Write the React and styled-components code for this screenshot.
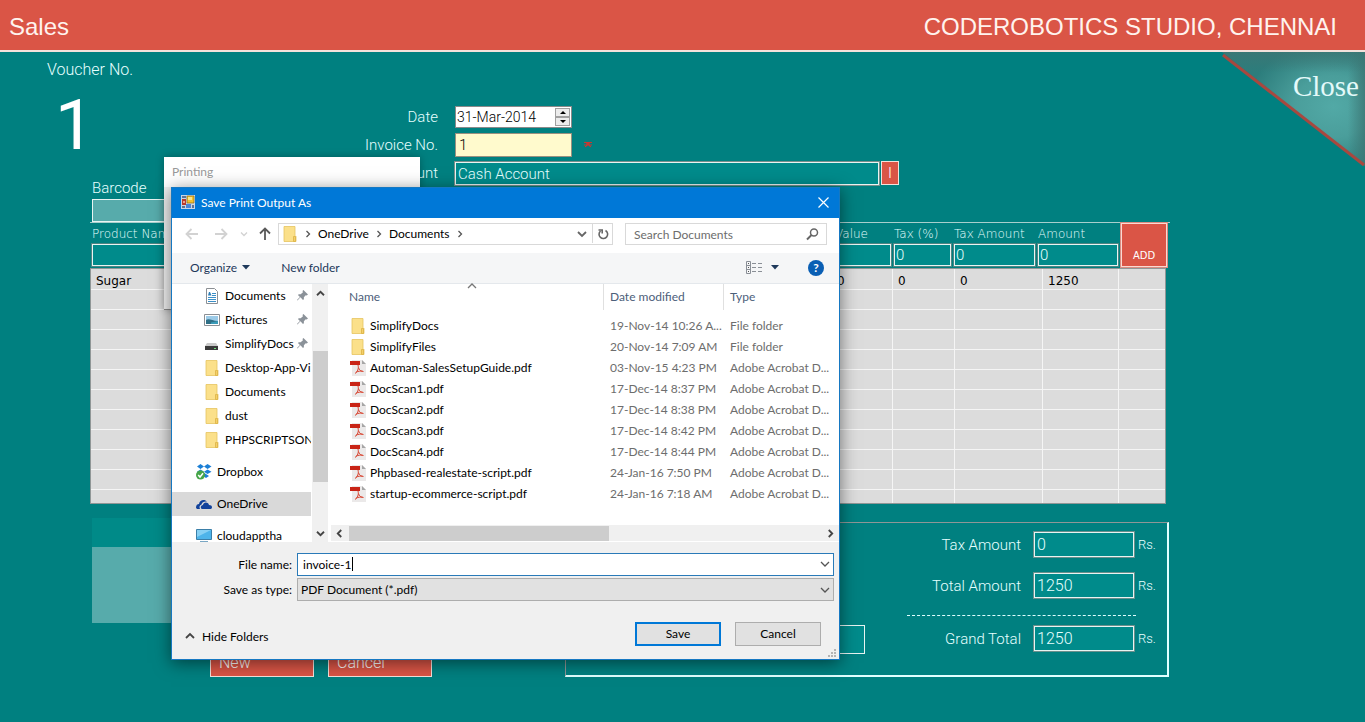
import { useState } from "react";
import styled, { createGlobalStyle } from "styled-components";

const entryFields = [
  { id: "value", label: "Value", width: 59, value: "" },
  { id: "tax", label: "Tax (%)", width: 60, value: "0" },
  { id: "taxAmount", label: "Tax Amount", width: 84, value: "0" },
  { id: "amount", label: "Amount", width: 83, value: "0" },
];

const totals = [
  { id: "totalTax", label: "Tax Amount", value: "0" },
  { id: "totalAmount", label: "Total Amount", value: "1250" },
];

const places = [
  { name: "Documents", icon: "document", pinned: true },
  { name: "Pictures", icon: "picture", pinned: true },
  { name: "SimplifyDocs", icon: "drive", pinned: true },
  { name: "Desktop-App-Vi", icon: "folder" },
  { name: "Documents", icon: "folder" },
  { name: "dust", icon: "folder" },
  { name: "PHPSCRIPTSON", icon: "folder" },
  { name: "Dropbox", icon: "dropbox", root: true },
  { name: "OneDrive", icon: "onedrive", root: true, selected: true },
  { name: "cloudapptha", icon: "computer", root: true },
];

const files = [
  { name: "SimplifyDocs", date: "19-Nov-14 10:26 A...", folder: true },
  { name: "SimplifyFiles", date: "20-Nov-14 7:09 AM", folder: true },
  { name: "Automan-SalesSetupGuide.pdf", date: "03-Nov-15 4:23 PM" },
  { name: "DocScan1.pdf", date: "17-Dec-14 8:37 PM" },
  { name: "DocScan2.pdf", date: "17-Dec-14 8:38 PM" },
  { name: "DocScan3.pdf", date: "17-Dec-14 8:42 PM" },
  { name: "DocScan4.pdf", date: "17-Dec-14 8:44 PM" },
  { name: "Phpbased-realestate-script.pdf", date: "24-Jan-16 7:50 PM" },
  { name: "startup-ecommerce-script.pdf", date: "24-Jan-16 7:18 AM" },
];

const emptyRows = Array.from({ length: 11 }, (_, i) => i);

export default function App() {
  return (
    <>
      <GlobalStyle />
      <Header>
        <h1>Sales</h1>
        <h2>CODEROBOTICS STUDIO, CHENNAI</h2>
      </Header>
      <Main>
        <CloseCorner type="button">
          <CornerArt />
          <span>Close</span>
        </CloseCorner>
        <VoucherForm />
        <Sheet>
          <Barcode>
            <label htmlFor="barcode">Barcode</label>
            <input id="barcode" />
          </Barcode>
          <ItemEntry />
          <ItemTable />
        </Sheet>
        <Summary />
        <PrintingWindow>Printing</PrintingWindow>
        <SaveDialog />
      </Main>
    </>
  );
}

function VoucherForm() {
  return (
    <Voucher>
      <VoucherNumber>
        <p>Voucher No.</p>
        <strong>1</strong>
      </VoucherNumber>
      <Fields>
        <label htmlFor="date">Date</label>
        <DateBox>
          <input id="date" defaultValue="31-Mar-2014" />
          <Spinner>
            <button type="button" aria-label="Next day">
              <svg width="6" height="3"><path d="M0 3 3 0 6 3Z" /></svg>
            </button>
            <button type="button" aria-label="Previous day">
              <svg width="6" height="3"><path d="M0 0 3 3 6 0Z" /></svg>
            </button>
          </Spinner>
        </DateBox>
        <label htmlFor="invoice">Invoice No.</label>
        <FieldLine>
          <InvoiceInput id="invoice" defaultValue="1" />
          <svg width="8" height="8" viewBox="0 0 8 8">
            <path d="M0 1.500h8M1.500 6 4 1.500 6.500 6M0 4h8M1 1l6 5M7 1 1 6" stroke="#d5342c" strokeWidth=".9" fill="none" />
          </svg>
        </FieldLine>
        <label htmlFor="account">Account</label>
        <FieldLine>
          <AccountInput id="account" defaultValue="Cash Account" />
          <LookupButton type="button">I</LookupButton>
        </FieldLine>
      </Fields>
    </Voucher>
  );
}

function ItemEntry() {
  return (
    <Entry>
      <EntryField>
        <label htmlFor="product">Product Name</label>
        <input id="product" />
      </EntryField>
      {entryFields.map((field) => (
        <EntryField key={field.id} $width={field.width}>
          <label htmlFor={field.id}>{field.label}</label>
          <input id={field.id} defaultValue={field.value} />
        </EntryField>
      ))}
      <AddButton type="button">ADD</AddButton>
    </Entry>
  );
}

function ItemTable() {
  return (
    <Items>
      <colgroup>
        <col />
        <Col $width={84} />
        <Col $width={62} />
        <Col $width={88} />
        <Col $width={76} />
        <Col $width={46} />
      </colgroup>
      <tbody>
        <tr>
          <td>Sugar</td>
          <td>1250</td>
          <td>0</td>
          <td>0</td>
          <td>1250</td>
          <td />
        </tr>
        {emptyRows.map((row) => (
          <tr key={row}>
            <td /><td /><td /><td /><td /><td />
          </tr>
        ))}
      </tbody>
    </Items>
  );
}

function TotalRow({ id, label, value }) {
  return (
    <TotalLine>
      <label htmlFor={id}>{label}</label>
      <input id={id} defaultValue={value} />
      <span>Rs.</span>
    </TotalLine>
  );
}

function Summary() {
  return (
    <SummaryRow>
      <Actions>
        <NotesHead />
        <NotesBody />
        <ButtonRow>
          <RedButton type="button">New</RedButton>
          <RedButton type="button">Cancel</RedButton>
        </ButtonRow>
      </Actions>
      <TotalsPanel>
        <PaidInput aria-label="Paid" />
        <TotalsList>
          {totals.map((total) => (
            <TotalRow key={total.id} {...total} />
          ))}
          <Rule />
          <TotalRow id="grandTotal" label="Grand Total" value="1250" />
        </TotalsList>
      </TotalsPanel>
    </SummaryRow>
  );
}

function SaveDialog() {
  const [fileName, setFileName] = useState("invoice-1");

  return (
    <Dialog role="dialog" aria-labelledby="dialog-title">
      <TitleBar>
        <AppIcon />
        <h3 id="dialog-title">Save Print Output As</h3>
        <button type="button" aria-label="Close dialog">
          <svg width="11" height="11"><path d="M.5.5l10 10M10.500.5l-10 10" stroke="#fff" strokeWidth="1.200" /></svg>
        </button>
      </TitleBar>
      <NavBar>
        <NavButton type="button" aria-label="Back" $width={29}><Arrow color="#d2d2d2" turn={0} /></NavButton>
        <NavButton type="button" aria-label="Forward" $width={30}><Arrow color="#d2d2d2" turn={180} /></NavButton>
        <NavButton type="button" aria-label="Recent" $width={16}><Chevron color="#d2d2d2" size={6} turn={0} /></NavButton>
        <NavButton type="button" aria-label="Up" $width={26}><Arrow color="#5a5a5a" turn={90} /></NavButton>
        <Address>
          <FolderIcon />
          <Chevron color="#555" size={6} turn={-90} />
          <span>OneDrive</span>
          <Chevron color="#555" size={6} turn={-90} />
          <span>Documents</span>
          <Chevron color="#555" size={6} turn={-90} />
          <AddressEnd>
            <button type="button" aria-label="Previous locations"><Chevron color="#666" size={8} turn={0} thick={2} /></button>
            <button type="button" aria-label="Refresh"><RefreshIcon /></button>
          </AddressEnd>
        </Address>
        <Search>
          <input aria-label="Search Documents" placeholder="Search Documents" />
          <svg width="13" height="13" fill="none" stroke="#666" strokeWidth="1.500">
            <circle cx="8" cy="4.500" r="3.500" />
            <path d="M5.500 7 1 11.500" strokeWidth="2" />
          </svg>
        </Search>
      </NavBar>
      <ToolBar>
        <button type="button">Organize <Caret /></button>
        <button type="button">New folder</button>
        <ToolEnd>
          <button type="button" aria-label="Change view"><ViewIcon /><Caret /></button>
          <HelpButton type="button" aria-label="Help">?</HelpButton>
        </ToolEnd>
      </ToolBar>
      <Browser>
        <Places>
          {places.map((place, index) => (
            <Place key={index} $root={place.root} $selected={place.selected}>
              <PlaceIcon kind={place.icon} />
              <span>{place.name}</span>
              {place.pinned && <PinIcon />}
            </Place>
          ))}
        </Places>
        <VerticalScroll>
          <Chevron color="#444" size={7} turn={180} thick={2} />
          <div />
          <Chevron color="#444" size={7} turn={0} thick={2} />
        </VerticalScroll>
        <FilePane>
          <FileTable>
            <colgroup>
              <Col $width={272} />
              <Col $width={120} />
              <col />
            </colgroup>
            <thead>
              <tr>
                <th>
                  Name
                  <SortMark><Chevron color="#777" size={8} turn={180} /></SortMark>
                </th>
                <th>Date modified</th>
                <th>Type</th>
              </tr>
            </thead>
            <tbody>
              {files.map((file) => (
                <tr key={file.name}>
                  <td>
                    <FileName>
                      {file.folder ? <FolderIcon /> : <PdfIcon />}
                      {file.name}
                    </FileName>
                  </td>
                  <td>{file.date}</td>
                  <td>{file.folder ? "File folder" : "Adobe Acrobat D..."}</td>
                </tr>
              ))}
            </tbody>
          </FileTable>
          <HorizontalScroll>
            <Chevron color="#444" size={7} turn={90} thick={2} />
            <div />
            <Chevron color="#444" size={7} turn={-90} thick={2} />
          </HorizontalScroll>
        </FilePane>
      </Browser>
      <Footer>
        <SaveFields>
          <label htmlFor="filename">File name:</label>
          <NameBox>
            <input id="filename" value={fileName} onChange={(e) => setFileName(e.target.value)} />
            <TextCaret />
            <Chevron color="#555" size={8} turn={0} />
          </NameBox>
          <label htmlFor="filetype">Save as type:</label>
          <TypeBox>
            <select id="filetype">
              <option>PDF Document (*.pdf)</option>
            </select>
            <Chevron color="#555" size={8} turn={0} />
          </TypeBox>
        </SaveFields>
        <FooterButtons>
          <HideFolders type="button">
            <Chevron color="#444" size={8} turn={180} thick={2} />
            Hide Folders
          </HideFolders>
          <DialogButton type="button" $primary>Save</DialogButton>
          <DialogButton type="button">Cancel</DialogButton>
        </FooterButtons>
        <Grip width="9" height="9" fill="#b4b4b4">
          <path d="M6 0h2v2H6zM3 3h2v2H3zM6 3h2v2H6zM0 6h2v2H0zM3 6h2v2H3zM6 6h2v2H6z" />
        </Grip>
      </Footer>
    </Dialog>
  );
}

/* Icons */

function CornerArt() {
  return (
    <svg viewBox="0 0 143 115" width="143" height="115">
      <defs>
        <radialGradient id="corner" cx="0.780" cy="0.480" r="0.600">
          <stop offset="0" stopColor="#52a9a6" />
          <stop offset="0.450" stopColor="#4a9e9b" />
          <stop offset="1" stopColor="#2c7d7c" />
        </radialGradient>
        <linearGradient id="cornerTop" x1="0" y1="0" x2="0" y2="1">
          <stop offset="0" stopColor="#3c7674" stopOpacity=".8" />
          <stop offset="0.180" stopColor="#3c7674" stopOpacity="0" />
        </linearGradient>
        <linearGradient id="cornerSide" x1="1" y1="0" x2="0" y2="0">
          <stop offset="0" stopColor="#3c7674" stopOpacity=".8" />
          <stop offset="0.120" stopColor="#3c7674" stopOpacity="0" />
        </linearGradient>
      </defs>
      <path d="M0 0H143V114Z" fill="url(#corner)" />
      <path d="M0 0H143V114Z" fill="url(#cornerTop)" />
      <path d="M0 0H143V114Z" fill="url(#cornerSide)" />
      <path d="M1 3 142 113" stroke="#a8483f" strokeWidth="3" />
    </svg>
  );
}

function Chevron({ color, size, turn, thick = 1 }) {
  const half = size / 2;
  return (
    <svg width={size + 2} height={size + 2} viewBox={`-1 -1 ${size + 2} ${size + 2}`} fill="none">
      <path
        d={`M0 ${half / 2}L${half} ${half * 1.5}L${size} ${half / 2}`}
        stroke={color}
        strokeWidth={thick === 2 ? 1.8 : 1.3}
        transform={`rotate(${turn} ${half} ${half})`}
      />
    </svg>
  );
}

function Arrow({ color, turn }) {
  return (
    <svg width="14" height="14" viewBox="0 0 14 14" fill="none">
      <path d="M13 7H2M6.500 2 1.500 7l5 5" stroke={color} strokeWidth="1.800" transform={`rotate(${turn} 7 7)`} />
    </svg>
  );
}

function Caret() {
  return <svg width="8" height="5"><path d="M0 0h8L4 4.500Z" fill="#1e395b" /></svg>;
}

function RefreshIcon() {
  return (
    <svg width="12" height="12" viewBox="0 0 12 12" fill="none" stroke="#666" strokeWidth="1.600">
      <path d="M3.500 3A4.300 4.300 0 1 0 8.500 2.500" />
      <path d="M1.500 2H5.200V5.500" />
    </svg>
  );
}

function ViewIcon() {
  return (
    <svg width="17" height="13" viewBox="0 0 17 13" fill="none" stroke="#8a8f96">
      <path d="M.5.5h4v12h-4zM.5 4.500h4M.5 8.500h4" />
      <path d="M6 2.500h4M12 2.500h4M6 6.500h4M12 6.500h4M6 10.500h4M12 10.500h4" />
      <path d="M2 2.500h1M2 6.500h1M2 10.500h1" stroke="#555" />
    </svg>
  );
}

function AppIcon() {
  return (
    <svg width="14" height="14" viewBox="0 0 14 14">
      <path d="M0 0h14v14H0z" fill="#c9d6e6" />
      <path d="M1 1h4v2H1zM1 11h3v2H1zM11 10h2v3h-2z" fill="#5c7396" />
      <path d="M1 4h4v6H1z" fill="#b93a2c" />
      <path d="M2 6h2v2H2z" fill="#e8a090" />
      <path d="M6 1h7v7H6z" fill="#f3c22f" stroke="#8c6a14" strokeWidth=".7" />
      <path d="M7 2h4v3H7z" fill="#fbe58c" />
      <path d="M5 9h5v4H5z" fill="#4a86d8" />
    </svg>
  );
}

function FolderIcon() {
  return (
    <svg width="16" height="16" viewBox="0 0 16 16">
      <path d="M2 .5h11v9l1 1V15.500H2z" fill="#fbe08a" stroke="#e6c460" strokeWidth=".8" />
      <path d="M11.500 10.500h2v5h-2z" fill="#f4d06a" stroke="#dcb245" strokeWidth=".8" />
    </svg>
  );
}

function PdfIcon() {
  return (
    <svg width="16" height="16" viewBox="0 0 16 16">
      <path d="M2 0h10l4 4v12H2z" fill="#ebe9e9" />
      <path d="M12 0v4h4z" fill="#a6a6a6" />
      <path d="M0 1h10v4H0z" fill="#c92416" />
      <path d="M8 5c1 3.500-.5 7-3 8.500M8.500 7.500c.5 2.500 2.500 3.800 5 4M6 12.200c2-1 4.500-1.300 6.500-1" fill="none" stroke="#d8432f" strokeWidth="1" />
    </svg>
  );
}

function PinIcon() {
  return (
    <svg width="11" height="11" viewBox="0 0 12 12">
      <path d="M7 0 12 5 10.500 6 9.500 5.600 7.500 8 7.500 10 6.500 10.800 3.800 8 .5 11.500 0 11 3.200 7.500 1 5.500 2 4.500 4 4.500 6.500 2.500 6 1.200Z" fill="#8b9299" />
    </svg>
  );
}

function PlaceIcon({ kind }) {
  if (kind === "folder") return <FolderIcon />;
  return (
    <svg width="16" height="16" viewBox="0 0 16 16">
      {kind === "document" && (
        <>
          <path d="M2.500.5h8l3 3v12h-11z" fill="#fff" stroke="#8b8f94" />
          <path d="M4 9.500h8M4 11.500h8M4 13.500h8M8 5.500h4M8 7.500h4" stroke="#3b8fc7" />
          <path d="M4 7.500 5 4h1l1.500 3.500z" fill="#2f7fb8" />
        </>
      )}
      {kind === "picture" && (
        <>
          <path d="M.5 2.500h15v11H.5z" fill="#fff" stroke="#8b8f94" />
          <path d="M2 4h12v8H2z" fill="#9ccbe8" />
          <path d="M2 8c3-2 6 1 12 1v3H2z" fill="#2f6f86" />
          <path d="M7 10.500 14 9v3H7z" fill="#3a9bb8" />
        </>
      )}
      {kind === "drive" && (
        <>
          <path d="M3 7h9l2 3H1z" fill="#c9c9c9" />
          <path d="M1 10h13v4H1z" fill="#3a3a3a" />
          <path d="M10 12h2v1h-2z" fill="#6fe07b" />
        </>
      )}
      {kind === "dropbox" && (
        <>
          <path d="M4.500 0 8 2.500 4.500 5 1 2.500zM11.500 0 15.500 2.500 11.500 5 8 2.500zM4.500 5.500 8 7.800 4.500 10 1 7.800zM11.500 5.500 15.500 7.800 11.500 10 8 7.800zM11.500 11 8 8.800 7 12l3 2 3-2z" fill="#1b7fd6" />
          <circle cx="4.500" cy="11" r="4.500" fill="#46a548" />
          <path d="M2.200 11 4 13l3-3.800" fill="none" stroke="#fff" strokeWidth="1.500" />
        </>
      )}
      {kind === "onedrive" && (
        <>
          <path d="M0 11.500C0 9 1.500 8 3 8c.5-4 5.500-5.500 8-2.500-3-.5-5 .8-5.500 3C3.500 9 3 11 4 13H2c-1.300 0-2-.6-2-1.500z" fill="#12429b" />
          <path d="M4.800 11.500c0-1.500 1-2.500 2.200-2.500.3-3 5-3.500 6 0 1.800 0 3 .8 3 2.200S15 13 14 13H6.500c-1 0-1.700-.6-1.700-1.500z" fill="#12429b" />
        </>
      )}
      {kind === "computer" && (
        <>
          <path d="M.5 1.500h15v10H.5z" fill="#4db4ea" stroke="#3b7fa8" />
          <path d="M1 2h14L1 9z" fill="#86d0f4" />
          <path d="M4 13.500h8" stroke="#7aa7c4" />
        </>
      )}
    </svg>
  );
}

/* Styles */

const GlobalStyle = createGlobalStyle`
  * {
    box-sizing: border-box;
  }

  body {
    margin: 0;
    min-height: 100vh;
    background: #008080;
    color: #e6ffff;
    font-family: Roboto, "Liberation Sans", sans-serif;
    font-size: 15px;
    font-weight: 300;
    overflow: hidden;
  }

  h1, h2, h3, p {
    margin: 0;
    font-weight: inherit;
  }

  button, input, select {
    margin: 0;
    padding: 0;
    border: 0;
    border-radius: 0;
    background: none;
    color: inherit;
    font: inherit;
    outline: none;
  }

  svg {
    display: block;
    flex: none;
  }
`;

const Header = styled.header`
  display: flex;
  align-items: center;
  justify-content: space-between;
  height: 52px;
  padding: 4px 28px 0 9px;
  border-bottom: 2px solid #f3e2dc;
  background: #da5546;
  color: #fff3ee;
  font-family: "Liberation Sans", Arial, sans-serif;
  font-weight: 400;

  h1, h2 {
    font-size: 24px;
  }
`;

const Main = styled.main`
  position: relative;
  min-height: 670px;
`;

const CloseCorner = styled.button`
  position: absolute;
  top: 0;
  right: 0;
  color: #e4fafa;
  font-family: "Liberation Serif", serif;
  font-size: 29px;
  font-weight: 400;

  span {
    position: absolute;
    top: 18px;
    right: 6px;
  }
`;

const Voucher = styled.section`
  display: flex;
  height: 127px;
  padding: 7px 0 0 47px;
`;

const VoucherNumber = styled.div`
  width: 317px;

  p {
    font-size: 16px;
    line-height: 22px;
  }

  strong {
    display: block;
    padding-left: 8px;
    color: #fff;
    font-size: 70px;
    font-weight: 400;
    line-height: 88px;
  }
`;

const Fields = styled.div`
  display: grid;
  grid-template-columns: 74px auto;
  grid-auto-rows: 24px;
  align-content: start;
  align-items: center;
  gap: 4px 17px;
  padding-top: 46px;

  label {
    justify-self: end;
  }
`;

const FieldLine = styled.div`
  display: flex;
  align-items: center;
  gap: 12px;
`;

const DateBox = styled.div`
  display: flex;
  align-items: center;
  width: 117px;
  height: 22px;
  padding: 0 1px;
  border: 1px solid #8a8a8a;
  background: #fff;
  color: #000;
  font-size: 14px;

  input {
    flex: 1;
    min-width: 0;
  }
`;

const Spinner = styled.div`
  display: flex;
  flex-direction: column;
  width: 15px;

  button {
    display: flex;
    align-items: center;
    justify-content: center;
    height: 9px;
    border: 1px solid #a0a0a0;
    background: #ececec;
  }
`;

const InvoiceInput = styled.input`
  width: 117px;
  height: 24px;
  padding-left: 3px;
  border: 1px solid #9a9080;
  background: #fffacd;
  color: #000;
`;

const AccountInput = styled.input`
  width: 424px;
  height: 23px;
  padding: 2px 0 0 2px;
  border: 1px solid #e8f4f2;
  outline: 1px solid #7b8f8c;
  background: #008b8b;
`;

const LookupButton = styled.button`
  width: 18px;
  height: 24px;
  margin-left: -10px;
  border: 1px solid #f3e2dc;
  background: #da5546;
  color: #fff;
`;

const Sheet = styled.section`
  margin: 0 199px 0 90px;
`;

const Barcode = styled.div`
  display: flex;
  flex-direction: column;
  width: 300px;
  padding-left: 2px;

  label {
    line-height: 18px;
  }

  input {
    height: 23px;
    margin-top: 2px;
    border: 1px solid #e8f4f2;
    background: #57abab;
  }
`;

const Entry = styled.div`
  display: flex;
  height: 46px;
  margin-right: -4px;
  padding-left: 2px;
  border-top: 1px solid #a8cfcd;
  font-family: "DejaVu Sans", Verdana, sans-serif;
  font-size: 12px;
  font-weight: 200;
`;

const EntryField = styled.div`
  display: flex;
  flex-direction: column;
  flex: ${(props) => (props.$width ? "none" : "1")};
  width: ${(props) => (props.$width ? `${props.$width}px` : "auto")};
  padding-right: 3px;

  label {
    height: 21px;
    line-height: 23px;
    white-space: nowrap;
  }

  input {
    width: 100%;
    height: 22px;
    padding-left: 1px;
    border: 1px solid #e8f4f2;
    outline: 1px solid #4f8482;
    background: #008b8b;
    font-family: Roboto, sans-serif;
    font-size: 15px;
    font-weight: 300;
  }
`;

const AddButton = styled.button`
  width: 46px;
  height: 44px;
  margin-right: 3px;
  padding-top: 20px;
  border: 1px solid #fbd9d2;
  outline: 1px solid #d98c82;
  background: #da5546;
  color: #fff;
  font-size: 10px;
  font-weight: 400;
`;

const Col = styled.col`
  width: ${(props) => props.$width}px;
`;

const Items = styled.table`
  width: 100%;
  table-layout: fixed;
  border-collapse: separate;
  border-spacing: 0;
  border: 1px solid #8f9696;
  background: #dcdcdc;
  color: #000;
  font-family: "DejaVu Sans", Verdana, sans-serif;
  font-size: 12px;
  font-weight: 400;

  td {
    height: 20px;
    padding: 0 5px;
    border-right: 1px solid #f5f5f5;
    border-bottom: 1px solid #f5f5f5;
    line-height: 16px;
  }

  td:first-child,
  td:last-child {
    border-right: 0;
  }

  tr:first-child td {
    height: 21px;
    padding-top: 4px;
  }

  tr:last-child td {
    height: 13px;
    border-bottom: 0;
  }
`;

const SummaryRow = styled.section`
  display: flex;
  justify-content: space-between;
  margin: 14px 196px 0 92px;
`;

const Actions = styled.div`
  width: 343px;
`;

const NotesHead = styled.div`
  height: 29px;
  background: #008a88;
`;

const NotesBody = styled.div`
  height: 76px;
  background: #57abab;
`;

const ButtonRow = styled.div`
  display: flex;
  justify-content: flex-end;
  gap: 14px;
  padding: 24px 3px 0 0;
`;

const RedButton = styled.button`
  width: 104px;
  height: 30px;
  padding-left: 8px;
  border: 1px solid #f3e2dc;
  background: #da5546;
  color: #fff;
  font-size: 16px;
  text-align: left;
`;

const TotalsPanel = styled.div`
  display: flex;
  align-items: flex-end;
  justify-content: space-between;
  width: 604px;
  height: 155px;
  margin-top: 4px;
  padding: 9px 4px 21px 199px;
  border: 2px solid #e0ffff;
  border-top: 1px solid #8f9696;
  border-left: 1px solid #8f9696;
`;

const PaidInput = styled.input`
  width: 100px;
  height: 29px;
  border: 1px solid #e8f4f2;
  background: #008b8b;
`;

const TotalsList = styled.div`
  display: flex;
  flex-direction: column;
  gap: 16px;
  align-self: flex-start;
  width: 256px;
`;

const TotalLine = styled.div`
  display: flex;
  align-items: center;
  justify-content: flex-end;

  label {
    margin-right: 13px;
  }

  input {
    width: 100px;
    height: 25px;
    padding-left: 2px;
    border: 1px solid #e8f4f2;
    outline: 1px solid #6b8f8c;
    background: #008b8b;
    font-size: 16px;
  }

  span {
    width: 29px;
    padding-left: 4px;
    font-size: 13px;
  }
`;

const Rule = styled.hr`
  width: 229px;
  height: 1px;
  margin: 1px 0 -6px;
  border: 0;
  border-top: 1px dashed #e0ffff;
`;

const PrintingWindow = styled.div`
  position: absolute;
  top: 105px;
  left: 164px;
  width: 256px;
  height: 153px;
  padding: 7px 8px;
  border-bottom: 1px solid #8a8a8a;
  background: linear-gradient(#fff 30px, #f0f0f0 30px);
  box-shadow: 0 0 8px rgba(0, 0, 0, 0.3);
  color: #999;
  font-family: Lato, sans-serif;
  font-size: 12px;
  font-weight: 400;
`;

const Dialog = styled.section`
  position: absolute;
  top: 135px;
  left: 171px;
  display: flex;
  flex-direction: column;
  width: 669px;
  height: 473px;
  border: 1px solid #1678c2;
  background: #fff;
  box-shadow: 0 3px 16px rgba(0, 0, 0, 0.5);
  color: #000;
  font-family: Lato, sans-serif;
  font-size: 12px;
  font-weight: 400;
`;

const TitleBar = styled.div`
  display: flex;
  align-items: center;
  gap: 6px;
  height: 30px;
  padding: 0 10px 2px 9px;
  background: #0078d7;
  color: #fff;

  h3 {
    flex: 1;
    font-size: 12px;
  }
`;

const NavBar = styled.div`
  display: flex;
  align-items: center;
  height: 35px;
  padding: 0 12px 3px 5px;
`;

const NavButton = styled.button`
  display: flex;
  justify-content: center;
  width: ${(props) => props.$width}px;
`;

const Address = styled.div`
  display: flex;
  align-items: center;
  flex: 1;
  gap: 6px;
  height: 22px;
  padding: 0 0 1px 3px;
  border: 1px solid #d9d9d9;
`;

const AddressEnd = styled.div`
  display: flex;
  align-self: stretch;
  margin-left: auto;

  button {
    display: flex;
    align-items: center;
    justify-content: center;
    width: 20px;
  }

  button:last-child {
    border-left: 1px solid #d9d9d9;
  }
`;

const Search = styled.div`
  display: flex;
  align-items: center;
  width: 202px;
  height: 22px;
  margin-left: 12px;
  padding: 0 7px 0 8px;
  border: 1px solid #d9d9d9;

  input {
    flex: 1;
    min-width: 0;
  }

  input::placeholder {
    color: #6d6d6d;
    opacity: 1;
  }
`;

const ToolBar = styled.div`
  display: flex;
  align-items: center;
  gap: 31px;
  height: 31px;
  padding: 0 15px 1px 18px;
  border-bottom: 1px solid #e4e8ec;
  background: #f5f6f7;
  color: #1e395b;

  button {
    display: flex;
    align-items: center;
    gap: 5px;
  }
`;

const ToolEnd = styled.div`
  display: flex;
  align-items: center;
  gap: 29px;
  margin-left: auto;

  button:first-child {
    gap: 8px;
  }
`;

const HelpButton = styled.button`
  justify-content: center;
  width: 16px;
  height: 16px;
  border-radius: 8px;
  background: #0a5fb4;
  color: #fff;
  font-weight: 700;
`;

const Browser = styled.div`
  display: flex;
  height: 258px;
`;

const Places = styled.ul`
  width: 139px;
  margin: 0;
  padding: 0;
  overflow: hidden;
  list-style: none;
`;

const Place = styled.li`
  display: flex;
  align-items: center;
  height: 24px;
  margin-top: ${(props) => (props.$root ? 8 : 0)}px;
  padding-bottom: 1px;
  padding-left: ${(props) => (props.$root ? 24 : 32)}px;
  background: ${(props) => (props.$selected ? "#d9d9d9" : "transparent")};

  span {
    flex: 1;
    margin-left: 5px;
    white-space: nowrap;
  }

  svg + span + svg {
    margin-right: 3px;
  }
`;

const VerticalScroll = styled.div`
  display: flex;
  flex-direction: column;
  align-items: center;
  width: 16px;
  margin-left: 1px;
  padding: 5px 0 4px;
  background: #f0f0f0;

  div {
    width: 15px;
    height: 131px;
    margin-top: 53px;
    margin-bottom: auto;
    background: #cdcdcd;
  }
`;

const FilePane = styled.div`
  display: flex;
  flex: 1;
  flex-direction: column;
  justify-content: space-between;
  min-width: 0;
  margin-left: 3px;
`;

const FileTable = styled.table`
  width: 100%;
  table-layout: fixed;
  border-spacing: 0;

  th {
    position: relative;
    height: 26px;
    padding: 0 6px 2px;
    border-left: 1px solid #e0e0e0;
    color: #4c607a;
    font-weight: 400;
    text-align: left;
  }

  th:first-child {
    padding-left: 18px;
    border-left: 0;
  }

  td {
    height: 21px;
    padding: 0 0 0 7px;
    color: #6d6d6d;
    white-space: nowrap;
  }

  td:first-child {
    padding-left: 19px;
    color: #000;
  }

  tbody::before {
    display: block;
    height: 5px;
    content: "";
  }
`;

const SortMark = styled.span`
  position: absolute;
  top: -3px;
  left: 50%;
`;

const FileName = styled.div`
  display: flex;
  align-items: center;
  gap: 4px;
`;

const HorizontalScroll = styled.div`
  display: flex;
  align-items: center;
  justify-content: space-between;
  height: 16px;
  margin-bottom: 1px;
  padding: 0 4px;
  background: #f0f0f0;

  div {
    width: 260px;
    height: 15px;
    margin-right: auto;
    margin-left: 5px;
    background: #cdcdcd;
  }
`;

const Footer = styled.div`
  position: relative;
  flex: 1;
  padding: 11px 5px 0 13px;
  background: #f0f0f0;
`;

const SaveFields = styled.div`
  display: grid;
  grid-template-columns: 107px 1fr;
  gap: 2px 5px;
  align-items: center;

  label {
    text-align: right;
  }
`;

const NameBox = styled.div`
  display: flex;
  align-items: center;
  height: 23px;
  padding: 0 3px 1px 5px;
  border: 1px solid #2a7ab8;
  background: #fff;

  input {
    field-sizing: content;
  }

  svg {
    margin-left: auto;
  }
`;

const TextCaret = styled.i`
  width: 1px;
  height: 14px;
  background: #000;
`;

const TypeBox = styled.div`
  display: flex;
  align-items: center;
  height: 23px;
  padding: 0 3px;
  border: 1px solid #adadad;
  background: #e1e1e1;

  select {
    flex: 1;
    appearance: none;
  }
`;

const FooterButtons = styled.div`
  display: flex;
  align-items: center;
  gap: 14px;
  padding: 21px 13px 0 0;
`;

const HideFolders = styled.button`
  display: flex;
  align-items: center;
  gap: 7px;
  margin-top: 4px;
  margin-right: auto;
`;

const DialogButton = styled.button`
  width: 86px;
  height: 24px;
  padding-bottom: 2px;
  border: ${(props) => (props.$primary ? "2px solid #0078d7" : "1px solid #adadad")};
  background: #e1e1e1;
`;

const Grip = styled.svg`
  position: absolute;
  right: 2px;
  bottom: 1px;
`;
